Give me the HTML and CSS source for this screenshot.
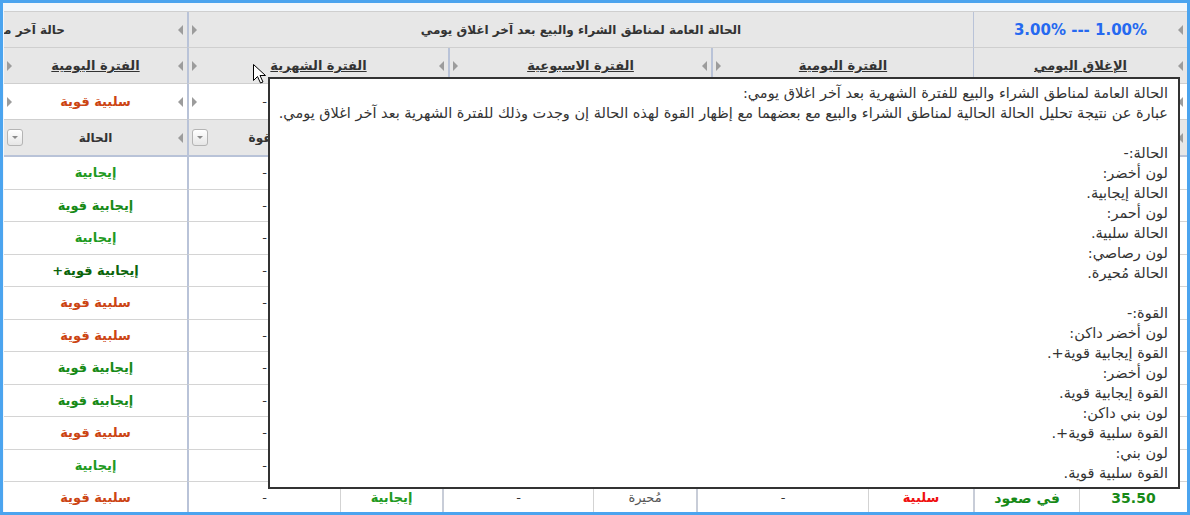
FILE: index.html
```html
<!DOCTYPE html>
<html lang="ar" dir="rtl">
<head>
    <meta charset="UTF-8">
    <meta name="viewport" content="width=device-width, initial-scale=1.0">
    <title>حالة مناطق الشراء والبيع</title>
    <link rel="stylesheet" href="styles.css">
</head>
<body>
    <div class="window">
        <div class="grid">
            <!-- group headers -->
            <div class="head-groups">
                <div class="hc gl-thin">
                    <span class="slot r"><i class="tri-l"></i></span>
                    <span class="lbl pct" dir="ltr">3.00% --- 1.00%</span>
                    <span class="slot l"></span>
                </div>
                <div class="hc span3 gl">
                    <span class="slot r"></span>
                    <span class="lbl top">الحالة العامة لمناطق الشراء والبيع بعد آخر اغلاق يومي</span>
                    <span class="slot l"><i class="tri-r"></i></span>
                </div>
                <div class="hc">
                    <span class="slot r"><i class="tri-l"></i></span>
                    <span class="lbl top cut">حالة آخر مرحلة للسهم</span>
                </div>

                <div class="hc gl-thin">
                    <span class="slot r"><i class="tri-l"></i></span>
                    <span class="lbl ul">الإغلاق اليومي</span>
                    <span class="slot l"></span>
                </div>
                <div class="hc gl">
                    <span class="slot r"></span>
                    <span class="lbl ul">الفترة اليومية</span>
                    <span class="slot l"><i class="tri-r"></i></span>
                </div>
                <div class="hc gl">
                    <span class="slot r"><i class="tri-l"></i></span>
                    <span class="lbl ul">الفترة الاسبوعية</span>
                    <span class="slot l"><i class="tri-r"></i></span>
                </div>
                <div class="hc gl">
                    <span class="slot r"><i class="tri-l"></i></span>
                    <span class="lbl ul">الفترة الشهرية</span>
                    <span class="slot l"><i class="tri-r"></i></span>
                </div>
                <div class="hc">
                    <span class="slot r"><i class="tri-l"></i></span>
                    <span class="lbl ul">الفترة اليومية</span>
                    <span class="slot l"><i class="tri-r"></i></span>
                </div>
            </div>

            <!-- summary row + column titles -->
            <div class="cols" id="subHead"></div>

            <!-- data rows -->
            <div class="cols" id="rows"></div>
        </div>
    </div>

    <div class="tip">
        <p>الحالة العامة لمناطق الشراء والبيع للفترة الشهرية بعد آخر اغلاق يومي:</p>
        <p>عبارة عن نتيجة تحليل الحالة الحالية لمناطق الشراء والبيع مع بعضهما مع إظهار القوة لهذه الحالة إن وجدت وذلك للفترة الشهرية بعد آخر اغلاق يومي.</p>
        <p class="gap"></p>
        <p>الحالة:-</p>
        <p>لون أخضر:</p>
        <p>الحالة إيجابية.</p>
        <p>لون أحمر:</p>
        <p>الحالة سلبية.</p>
        <p>لون رصاصي:</p>
        <p>الحالة مُحيرة.</p>
        <p class="gap"></p>
        <p>القوة:-</p>
        <p>لون أخضر داكن:</p>
        <p>القوة إيجابية قوية+.</p>
        <p>لون أخضر:</p>
        <p>القوة إيجابية قوية.</p>
        <p>لون بني داكن:</p>
        <p>القوة سلبية قوية+.</p>
        <p>لون بني:</p>
        <p>القوة سلبية قوية.</p>
    </div>

    <svg class="cursor" width="13" height="20" viewBox="0 0 13 20">
        <path d="M0.5 0.5 V16.5 L4.5 12.5 L7.5 19 L10 18 L7 11.5 H12.5 Z" fill="#fff" stroke="#000"/>
    </svg>

    <script>
        // colour class for each cell value
        const tone = {
            'إيجابية': 'pos',
            'إيجابية قوية': 'pos2',
            'إيجابية قوية+': 'pos3',
            'سلبية': 'neg',
            'سلبية قوية': 'neg2',
            'مُحيرة': 'mix',
            '-': 'dash',
            'في صعود': 'up',
            'في هبوط': 'neg'
        };

        // divider class per column, right to left
        const edge = ['thin', 'group', 'thin', 'group', 'thin', 'group', 'thin', 'main', ''];

        // price, direction, daily state/power, weekly state/power, monthly state/power, last state
        const rows = [
            ['41.20', 'في صعود', 'إيجابية', '-', 'إيجابية', '-', 'إيجابية', '-', 'إيجابية'],
            ['18.64', 'في صعود', 'إيجابية', '-', 'إيجابية', '-', 'إيجابية', '-', 'إيجابية قوية'],
            ['27.10', 'في صعود', 'مُحيرة', '-', 'إيجابية', '-', 'إيجابية', '-', 'إيجابية'],
            ['62.30', 'في صعود', 'إيجابية', '-', 'إيجابية', '-', 'إيجابية', '-', 'إيجابية قوية+'],
            ['12.08', 'في هبوط', 'سلبية', '-', 'سلبية', '-', 'مُحيرة', '-', 'سلبية قوية'],
            ['9.45', 'في هبوط', 'سلبية', '-', 'مُحيرة', '-', 'سلبية', '-', 'سلبية قوية'],
            ['88.90', 'في صعود', 'إيجابية', '-', 'إيجابية', '-', 'إيجابية', '-', 'إيجابية قوية'],
            ['23.76', 'في صعود', 'إيجابية', '-', 'مُحيرة', '-', 'إيجابية', '-', 'إيجابية قوية'],
            ['15.32', 'في هبوط', 'سلبية', '-', 'سلبية', '-', 'سلبية', '-', 'سلبية قوية'],
            ['30.05', 'في صعود', 'إيجابية', '-', 'إيجابية', '-', 'مُحيرة', '-', 'إيجابية'],
            ['35.50', 'في صعود', 'سلبية', '-', 'مُحيرة', '-', 'إيجابية', '-', 'سلبية قوية']
        ];

        function cell(value, i) {
            const cls = value.match(/^[\d.]+$/) ? 'price' : (tone[value] || '');
            return `<div class="bc ${edge[i]} ${cls}">${value}</div>`;
        }

        document.getElementById('rows').innerHTML = rows.map(r => r.map(cell).join('')).join('');

        // summary row and column titles above the data
        const summary = ['35.50', 'في صعود', 'سلبية', '-', 'مُحيرة', '-', 'إيجابية', '-', 'سلبية قوية'];
        const titles = ['السعر', 'الاتجاه', 'الحالة', 'القوة', 'الحالة', 'القوة', 'الحالة', 'القوة', 'الحالة'];

        const summaryHTML = summary.map((v, i) => `
            <div class="hc white ${edge[i]}">
                <span class="slot r">${i === 0 || i === 8 ? '<i class="tri-l"></i>' : ''}</span>
                <span class="lbl ${tone[v] || 'price'}">${v}</span>
                <span class="slot l">${i === 7 || i === 8 ? '<i class="tri-r"></i>' : ''}</span>
            </div>
        `).join('');

        const titlesHTML = titles.map((t, i) => `
            <div class="hc titles ${edge[i]}">
                <span class="slot r">${i === 0 || i === 8 ? '<i class="tri-l"></i>' : ''}</span>
                <span class="lbl">${t}</span>
                <span class="slot l"><span class="dd"></span></span>
            </div>
        `).join('');

        document.getElementById('subHead').innerHTML = summaryHTML + titlesHTML;
    </script>
</body>
</html>
```

FILE: styles.css
```css
* {
    margin: 0;
    padding: 0;
    box-sizing: border-box;
}

html, body {
    width: 1190px;
    height: 515px;
    overflow: hidden;
}

body {
    position: relative;
    font-family: Tahoma, "DejaVu Sans", sans-serif;
    font-size: 13px;
    color: #333;
    background: #fff;
}

.window {
    height: 515px;
    border: 3px solid #4ba4ef;
    background: #f3f7fb;
    padding: 8px 0 0 1px;
    overflow: hidden;
}

.grid {
    border-top: 1px solid #cfcfcf;
    background: #fff;
}

.head-groups {
    display: grid;
    grid-template-columns: 214px 262px 263px 261px 183px;
}

.cols {
    display: grid;
    grid-template-columns: 108px 106px 105px 172px 103px 151px 102px 153px 183px;
}

/* header cells */
.hc {
    height: 36px;
    background: #e7e7e7;
    border-bottom: 1px solid #cfcfcf;
    display: flex;
    align-items: center;
    font-weight: bold;
    overflow: hidden;
}

.hc.white {
    background: #fff;
}

.hc.titles {
    height: 37px;
    border-bottom: 2px solid #b9c3d8;
    font-size: 12px;
}

.span3 {
    grid-column: span 3;
}

.gl, .main {
    border-left: 2px solid #b9c3d8;
}

.gl-thin {
    border-left: 1px solid #b9c3d8;
}

.group {
    border-left: 2px solid #c8cdd8;
}

.thin {
    border-left: 1px solid #d3d3d3;
}

.slot {
    width: 24px;
    flex: none;
    display: flex;
    align-items: center;
}

.slot.r {
    justify-content: flex-start;
    padding-right: 4px;
}

.slot.l {
    justify-content: flex-end;
    padding-left: 3px;
}

.lbl {
    flex: 1;
    text-align: center;
    white-space: nowrap;
    overflow: hidden;
}

.lbl.top {
    font-size: 12px;
}

.lbl.cut {
    text-align: right;
    padding-right: 98px;
}

.ul {
    text-decoration: underline;
}

.pct {
    color: #2569f0;
    font-size: 15px;
}

.tri-l {
    width: 0;
    height: 0;
    border-style: solid;
    border-width: 5px 5px 5px 0;
    border-color: transparent #9c9c9c transparent transparent;
}

.tri-r {
    width: 0;
    height: 0;
    border-style: solid;
    border-width: 5px 0 5px 5px;
    border-color: transparent transparent transparent #9c9c9c;
}

/* filter button */
.dd {
    width: 16px;
    height: 17px;
    border: 1px solid #b4b4b4;
    border-radius: 3px;
    background: linear-gradient(#fff, #e6e6e6);
    display: flex;
    align-items: center;
    justify-content: center;
}

.dd::after {
    content: '';
    border-style: solid;
    border-width: 3px 3px 0 3px;
    border-color: #8a8a8a transparent transparent transparent;
}

/* body cells */
.bc {
    height: 32.5px;
    border-bottom: 1px solid #d4d4d4;
    display: flex;
    align-items: center;
    justify-content: center;
    font-weight: bold;
    background: #fff;
    white-space: nowrap;
    overflow: hidden;
}

.pos { color: #1f9a1f; }
.pos2 { color: #178a17; }
.pos3 { color: #0b650b; }
.neg { color: #f01010; }
.neg2 { color: #cc4514; }

.up, .price {
    color: #178a17;
    font-size: 14px;
}

.mix {
    color: #555;
    font-weight: normal;
}

.dash {
    color: #333;
    font-weight: normal;
}

/* hover tooltip */
.tip {
    position: absolute;
    left: 268px;
    top: 77px;
    width: 912px;
    height: 412px;
    border: 2px solid #333;
    background: #fff;
    padding: 4px 10px;
    font-size: 14.5px;
    line-height: 20px;
    color: #333;
    text-align: right;
    white-space: nowrap;
}

.tip .gap {
    height: 20px;
}

.cursor {
    position: absolute;
    left: 253px;
    top: 64px;
}
```
